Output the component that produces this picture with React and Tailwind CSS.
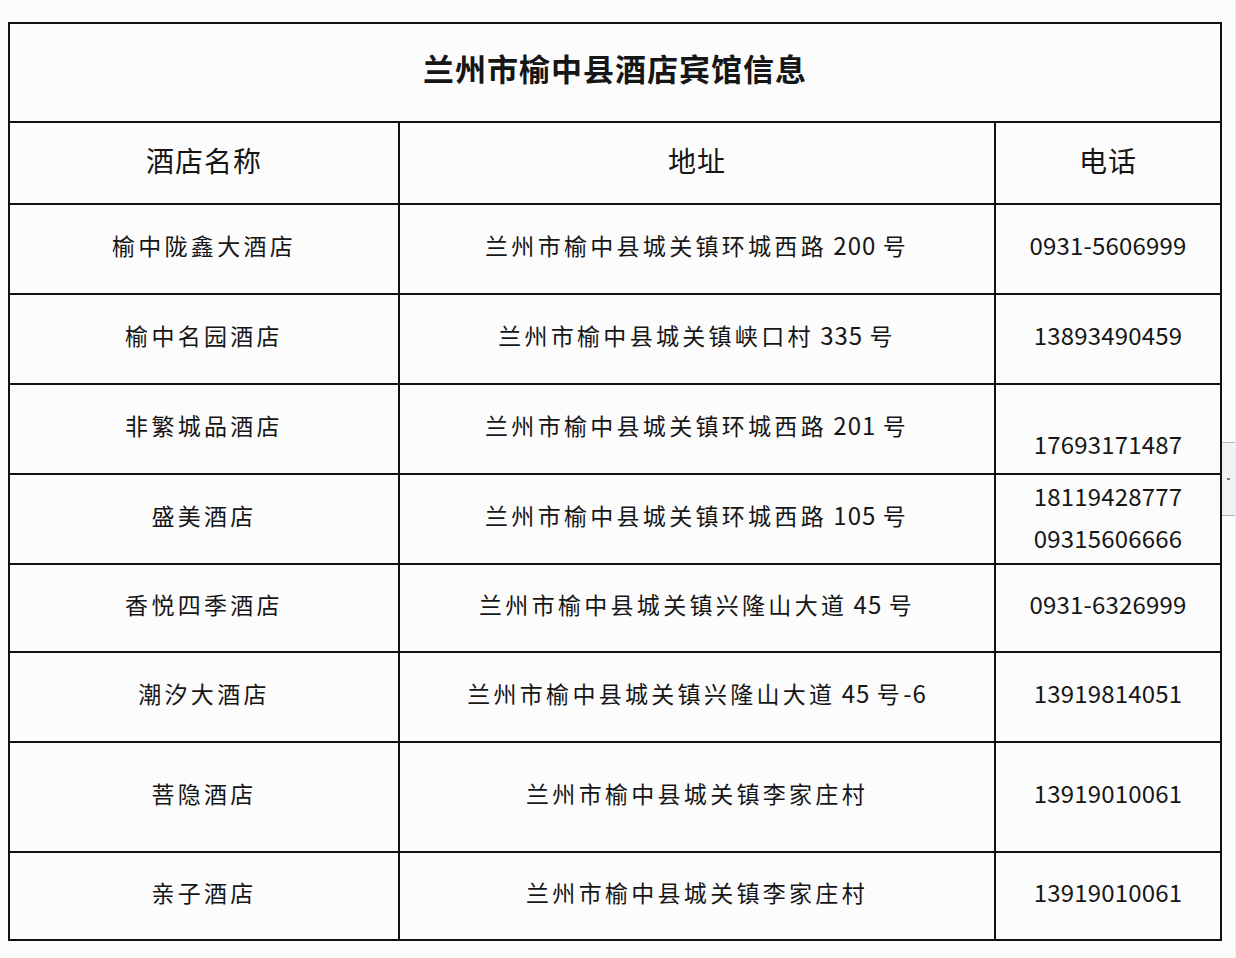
import React from "react";

const rows = [
  { name: "榆中陇鑫大酒店", addr: "兰州市榆中县城关镇环城西路 200 号", phone: ["0931-5606999"], h: "h-[90px]" },
  { name: "榆中名园酒店", addr: "兰州市榆中县城关镇峡口村 335 号", phone: ["13893490459"], h: "h-[90px]" },
  { name: "非繁城品酒店", addr: "兰州市榆中县城关镇环城西路 201 号", phone: ["17693171487"], h: "h-[90px]", low: true },
  { name: "盛美酒店", addr: "兰州市榆中县城关镇环城西路 105 号", phone: ["18119428777", "09315606666"], h: "h-[90px]" },
  { name: "香悦四季酒店", addr: "兰州市榆中县城关镇兴隆山大道 45 号", phone: ["0931-6326999"], h: "h-[88px]" },
  { name: "潮汐大酒店", addr: "兰州市榆中县城关镇兴隆山大道 45 号-6", phone: ["13919814051"], h: "h-[90px]" },
  { name: "菩隐酒店", addr: "兰州市榆中县城关镇李家庄村", phone: ["13919010061"], h: "h-[110px]" },
  { name: "亲子酒店", addr: "兰州市榆中县城关镇李家庄村", phone: ["13919010061"], h: "h-[88px]" },
];

function Mixed({ text }) {
  const parts = text.match(/[0-9\- ]+|[^0-9\- ]+/g) || [];
  return (
    <>
      {parts.map((p, i) =>
        /^[0-9\- ]+$/.test(p) ? (
          <span key={i} className="text-[24px] tracking-[1px] whitespace-pre">
            {p}
          </span>
        ) : (
          <span key={i}>{p}</span>
        )
      )}
    </>
  );
}

const font = { fontFamily: '"Noto Sans CJK SC", "Noto Sans", sans-serif' };
const cell = "border-2 border-[#111] text-center align-middle";

export default function App() {
  return (
    <div className="relative w-[1236px] h-[958px] bg-[#fcfcfd] text-[#161616] border-r border-[#ececef]" style={font}>
      <div className="absolute right-0 top-[442px] w-[13px] h-[74px] bg-[#f1f1f3] border-t border-b border-[#b5b5b8] flex items-center justify-center">
        <div className="w-[3px] h-[2px] bg-[#777]" />
      </div>
      <div className="pt-[22px] pl-[8px]">
        <table className="border-collapse w-[1212px] table-fixed">
          <colgroup>
            <col className="w-[390px]" />
            <col className="w-[596px]" />
            <col className="w-[226px]" />
          </colgroup>
          <tbody>
            <tr className="h-[99px]">
              <td colSpan={3} className={cell + " pb-[8px] text-[31px] font-bold tracking-[1px]"}>
                兰州市榆中县酒店宾馆信息
              </td>
            </tr>
            <tr className="h-[82px]">
              {["酒店名称", "地址", "电话"].map((t) => (
                <td key={t} className={cell + " pb-[6px] text-[28px] tracking-[1px]"}>
                  {t}
                </td>
              ))}
            </tr>
            {rows.map((r, i) => {
              const multi = r.phone.length > 1;
              return (
                <tr key={i} className={r.h}>
                  <td className={cell + " pb-[8px] text-[23px] tracking-[3.3px]"}>{r.name}</td>
                  <td className={cell + " pb-[8px] text-[23px] tracking-[3.3px]"}>
                    <Mixed text={r.addr} />
                  </td>
                  <td
                    className={
                      cell +
                      " text-[24px] tracking-[0.2px] " +
                      (multi ? "pb-[4px]" : "pb-[8px]") +
                      (r.low ? " pt-[38px]" : "")
                    }
                  >
                    <div className="flex flex-col items-center">
                      {r.phone.map((p, j) => (
                        <div key={j} className={multi ? "leading-[42px]" : ""}>
                          {p}
                        </div>
                      ))}
                    </div>
                  </td>
                </tr>
              );
            })}
          </tbody>
        </table>
      </div>
    </div>
  );
}
